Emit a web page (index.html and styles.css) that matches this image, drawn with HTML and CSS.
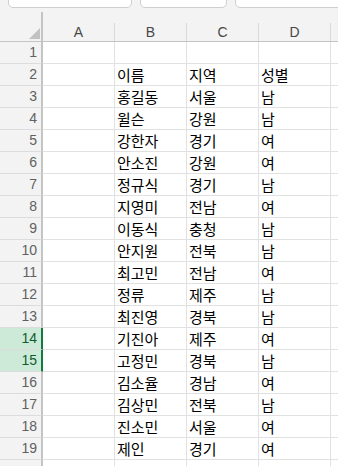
FILE: index.html
```html
<!DOCTYPE html>
<html lang="ko">
<head>
    <meta charset="UTF-8">
    <meta name="viewport" content="width=device-width, initial-scale=1.0">
    <title>명단</title>
    <link rel="stylesheet" href="styles.css">
</head>
<body>
    <div class="formula-bar">
        <div class="box name-box">F15</div>
        <div class="box action-box"><span>✕</span><span>✓</span><span class="fx">fx</span></div>
        <div class="box input-box"></div>
    </div>

    <div class="sheet">
        <div class="header-row">
            <div class="corner">
                <svg width="11" height="11" viewBox="0 0 11 11"><polygon points="11,0 11,11 0,11" fill="#c2c2c2"/></svg>
            </div>
            <div class="col-head">A</div>
            <div class="col-head">B</div>
            <div class="col-head">C</div>
            <div class="col-head">D</div>
            <div class="col-head"></div>
        </div>
        <div id="rows"></div>
    </div>

    <script>
        const data = [
            ['', '', ''],
            ['이름', '지역', '성별'],
            ['홍길동', '서울', '남'],
            ['윌슨', '강원', '남'],
            ['강한자', '경기', '여'],
            ['안소진', '강원', '여'],
            ['정규식', '경기', '남'],
            ['지영미', '전남', '여'],
            ['이동식', '충청', '남'],
            ['안지원', '전북', '남'],
            ['최고민', '전남', '여'],
            ['정류', '제주', '남'],
            ['최진영', '경북', '남'],
            ['기진아', '제주', '여'],
            ['고정민', '경북', '남'],
            ['김소율', '경남', '여'],
            ['김상민', '전북', '남'],
            ['진소민', '서울', '여'],
            ['제인', '경기', '여']
        ];
        const selectedRows = [14, 15];
        const rowsDiv = document.getElementById('rows');

        function addRow(label, values) {
            const row = document.createElement('div');
            row.className = 'row';

            const head = document.createElement('div');
            head.className = 'row-head';
            if (selectedRows.includes(label)) {
                head.classList.add('selected');
            }
            head.textContent = label;
            row.appendChild(head);

            // colonne A vide, puis B C D, puis E
            const cells = [''].concat(values).concat(['']);
            cells.forEach(text => {
                const cell = document.createElement('div');
                cell.className = 'cell';
                cell.textContent = text;
                row.appendChild(cell);
            });
            rowsDiv.appendChild(row);
        }

        data.forEach((values, i) => addRow(i + 1, values));
        // ligne suivante, coupée en bas de l'écran
        addRow('', ['', '', '']);
    </script>
</body>
</html>
```

FILE: styles.css
```css
body {
    margin: 0;
    height: 466px;
    background-color: #ffffff;
    font-family: 'Liberation Sans', Arial, sans-serif;
    overflow: hidden;
}
.formula-bar {
    display: flex;
    align-items: flex-start;
    height: 12px;
    background-color: #f3f3f3;
    overflow: hidden;
}
.box {
    box-sizing: border-box;
    height: 26px;
    margin-top: -18px;
    background-color: white;
    border: 1px solid #cfcfcf;
    border-radius: 5px;
    font-size: 13px;
    line-height: 24px;
    color: #222;
}
.name-box {
    width: 124px;
    margin-left: 8px;
    padding-left: 3px;
}
.action-box {
    display: flex;
    gap: 14px;
    width: 87px;
    margin-left: 8px;
    padding-left: 10px;
    color: #9a9a9a;
}
.action-box .fx {
    margin-left: 6px;
    color: #444;
    font-style: italic;
}
.input-box {
    flex: 1;
    margin-left: 8px;
    margin-right: -10px;
}
.sheet {
    background-color: white;
}
.header-row {
    display: flex;
    height: 29px;
    background-color: #f3f3f3;
    border-bottom: 1px solid #c4c4c4;
}
.corner {
    display: flex;
    justify-content: flex-end;
    align-items: flex-end;
    width: 43px;
    flex-shrink: 0;
    padding: 0 1px 2px 0;
    box-sizing: border-box;
    border-right: 2px solid #c4c4c4;
}
.col-head {
    align-self: flex-end;
    width: 71px;
    height: 18px;
    flex-shrink: 0;
    border-right: 1px solid #dadada;
    text-align: center;
    font-size: 14px;
    line-height: 18px;
    color: #474747;
}
.row {
    display: flex;
    height: 22px;
}
.row-head {
    width: 43px;
    flex-shrink: 0;
    box-sizing: border-box;
    padding-right: 4px;
    background-color: #f3f3f3;
    border-right: 2px solid #c4c4c4;
    border-bottom: 1px solid #dcdcdc;
    text-align: right;
    font-size: 14px;
    line-height: 21px;
    color: #616161;
}
.row-head.selected {
    background-color: #cde9d7;
    border-right-color: #107c41;
    color: #0f5e32;
}
.cell {
    width: 72px;
    flex-shrink: 0;
    padding-left: 2px;
    box-sizing: border-box;
    border-right: 1px solid #e1e1e1;
    border-bottom: 1px solid #e1e1e1;
    font-family: 'Noto Sans CJK KR', sans-serif;
    font-size: 15px;
    line-height: 21px;
    color: #000;
    white-space: nowrap;
    overflow: hidden;
}
```
